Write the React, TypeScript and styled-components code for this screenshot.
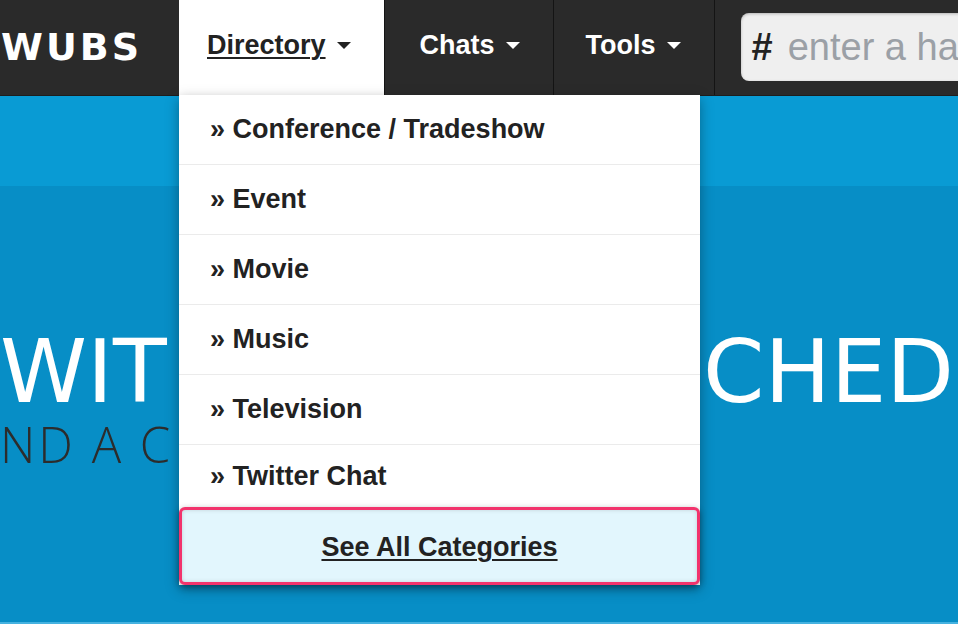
import React from "react";
import styled, { createGlobalStyle } from "styled-components";

const Global = createGlobalStyle`
  html, body { margin: 0; padding: 0; overflow: hidden; }
  body { width: 958px; height: 624px; font-family: "Liberation Sans", Arial, sans-serif; }
  * { box-sizing: border-box; }
`;

const Page = styled.div`
  width: 958px;
  height: 624px;
  display: flex;
  flex-direction: column;
  background: #078ec6;
`;

const Nav = styled.nav`
  height: 96px;
  flex-shrink: 0;
  display: flex;
  align-items: stretch;
  background: #2a2a2a;
  border-bottom: 1px solid #1e1e1e;
  position: relative;
  z-index: 5;
`;

const Logo = styled.div`
  width: 179px;
  flex-shrink: 0;
  display: flex;
  align-items: center;
  padding: 0 0 2px 1px;
  color: #fff;
  font-family: "DejaVu Sans", sans-serif;
  font-weight: 700;
  font-size: 38px;
  letter-spacing: 3px;
`;

const NavItem = styled.div<{ $active?: boolean; $padLeft: number }>`
  position: relative;
  display: flex;
  align-items: center;
  padding: 0 33px 4px ${(p) => p.$padLeft}px;
  background: ${(p) => (p.$active ? "#fff" : "transparent")};
  border-right: 1px solid #141414;
  color: ${(p) => (p.$active ? "#222" : "#fff")};
  font-weight: 700;
  font-size: 27px;
  flex-shrink: 0;
`;

const NavLabel = styled.span<{ $underline?: boolean }>`
  text-decoration: ${(p) => (p.$underline ? "underline" : "none")};
  text-decoration-thickness: 2px;
  text-underline-offset: 3px;
`;

const Caret = styled.span<{ $dark?: boolean }>`
  display: inline-block;
  margin-left: 11px;
  width: 0;
  height: 0;
  border-left: 7px solid transparent;
  border-right: 7px solid transparent;
  border-top: 7px solid ${(p) => (p.$dark ? "#222" : "#fff")};
`;

const Search = styled.div`
  flex-shrink: 0;
  width: 260px;
  margin: 13px 0 14px 26px;
  height: 68px;
  display: flex;
  align-items: center;
  padding-left: 11px;
  background: #efefef;
  border-radius: 8px;
  box-shadow: inset 0 1px 3px rgba(0, 0, 0, 0.25);
  font-size: 38px;
`;

const Hash = styled.span`
  font-weight: 700;
  color: #222;
`;

const SearchInput = styled.input`
  flex: 1;
  min-width: 0;
  border: none;
  background: transparent;
  outline: none;
  font-family: "Liberation Sans", Arial, sans-serif;
  font-size: 38px;
  padding: 0 0 0 15px;
  color: #333;
  &::placeholder { color: #9ba0a6; }
`;

const Dropdown = styled.ul`
  position: absolute;
  top: 100%;
  left: 0;
  width: 521px;
  margin: 0;
  padding: 0;
  list-style: none;
  background: #fff;
  box-shadow: 0 4px 12px rgba(0, 0, 0, 0.35);
  z-index: 10;
`;

const DropItem = styled.li<{ $last?: boolean }>`
  height: ${(p) => (p.$last ? 62 : 70)}px;
  display: flex;
  align-items: center;
  padding: 0 0 ${(p) => (p.$last ? 0 : 1)}px 31px;
  border-bottom: ${(p) => (p.$last ? "none" : "1px solid #ebebeb")};
  color: #222;
  font-weight: 700;
  font-size: 27px;
`;

const SeeAll = styled.li`
  height: 78px;
  display: flex;
  align-items: center;
  justify-content: center;
  padding-top: 2px;
  background: #e2f6fd;
  border: 3px solid #f2336c;
  border-radius: 6px;
  box-shadow: inset 0 0 4px rgba(0, 0, 0, 0.15), 0 2px 6px rgba(0, 0, 0, 0.35);
  color: #222;
  font-weight: 700;
  font-size: 27px;
  text-decoration: underline;
  text-decoration-thickness: 2px;
  text-underline-offset: 3px;
`;

const Band = styled.div`
  height: 90px;
  flex-shrink: 0;
  background: #099bd4;
`;

const Hero = styled.section`
  flex: 1;
  overflow: hidden;
  padding-top: 142px;
  background: #078ec6;
  border-bottom: 2px solid #45b2e0;
`;

const Headline = styled.div`
  display: flex;
  justify-content: space-between;
  padding: 0 4px 0 0;
  font-family: "DejaVu Sans", sans-serif;
  font-weight: 400;
  font-size: 88px;
  line-height: 1;
  color: #fff;
  white-space: nowrap;
`;

const SubLine = styled.div`
  margin-top: 4px;
  font-family: "Open Sans", sans-serif;
  font-weight: 300;
  font-size: 49px;
  line-height: 1;
  letter-spacing: 3px;
  color: #2c2c2c;
  white-space: nowrap;
`;

const categories = [
  "Conference / Tradeshow",
  "Event",
  "Movie",
  "Music",
  "Television",
  "Twitter Chat",
];

export default function App() {
  return (
    <Page>
      <Global />
      <Nav>
        <Logo>WUBS</Logo>
        <NavItem $active $padLeft={28}>
          <NavLabel $underline>Directory</NavLabel>
          <Caret $dark />
          <Dropdown>
            {categories.map((c, i) => (
              <DropItem key={c} $last={i === categories.length - 1}>
                » {c}
              </DropItem>
            ))}
            <SeeAll>See All Categories</SeeAll>
          </Dropdown>
        </NavItem>
        <NavItem $padLeft={35}>
          <NavLabel>Chats</NavLabel>
          <Caret />
        </NavItem>
        <NavItem $padLeft={32}>
          <NavLabel>Tools</NavLabel>
          <Caret />
        </NavItem>
        <Search>
          <Hash>#</Hash>
          <SearchInput placeholder="enter a hashtag" />
        </Search>
      </Nav>
      <Band />
      <Hero>
        <Headline>
          <span>WIT</span>
          <span>CHED</span>
        </Headline>
        <SubLine>ND A C</SubLine>
      </Hero>
    </Page>
  );
}
